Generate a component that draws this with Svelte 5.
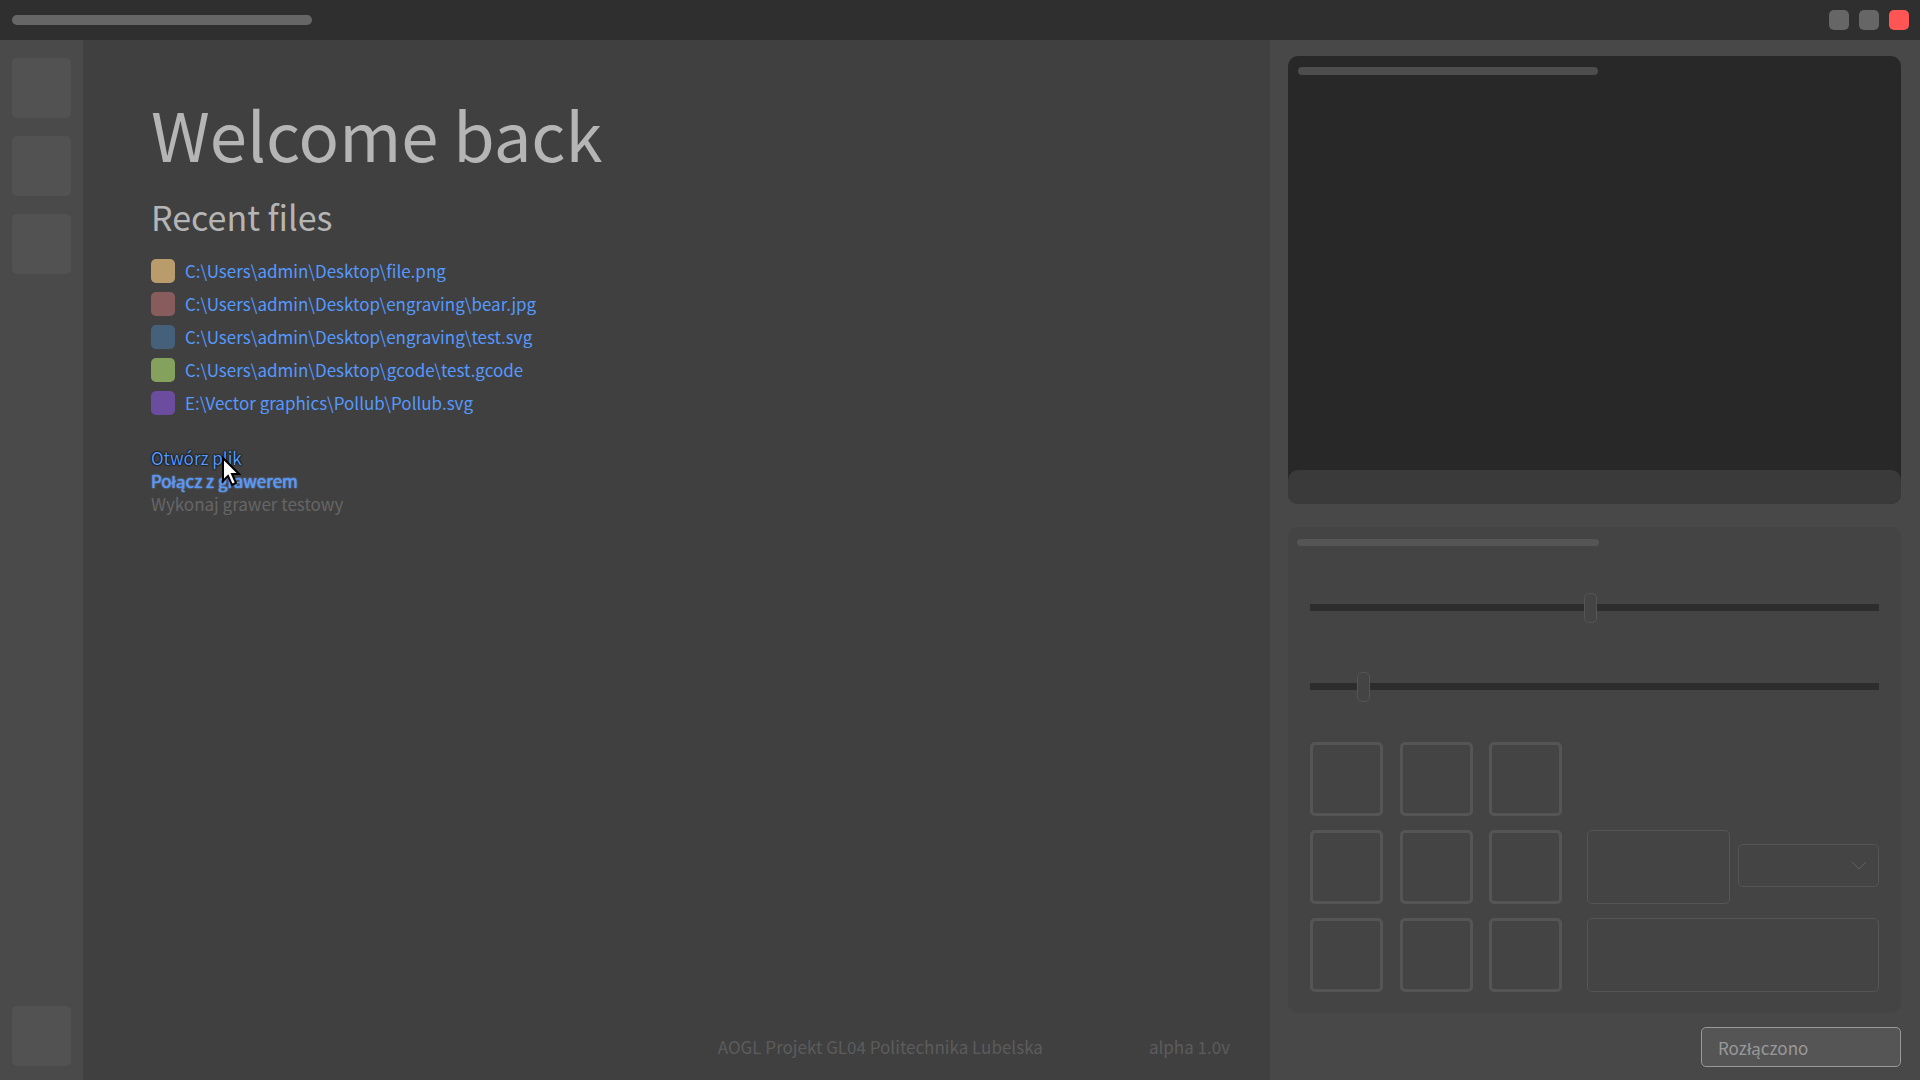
<script>
  const tools = ['Tool 1', 'Tool 2', 'Tool 3'];
  const files = [
    { path: 'C:\\Users\\admin\\Desktop\\file.png', kind: 'png' },
    { path: 'C:\\Users\\admin\\Desktop\\engraving\\bear.jpg', kind: 'jpg' },
    { path: 'C:\\Users\\admin\\Desktop\\engraving\\test.svg', kind: 'svg' },
    { path: 'C:\\Users\\admin\\Desktop\\gcode\\test.gcode', kind: 'gcode' },
    { path: 'E:\\Vector graphics\\Pollub\\Pollub.svg', kind: 'vector' }
  ];
  const pads = [1, 2, 3, 4, 5, 6, 7, 8, 9];
  let power = $state(49.3);
  let speed = $state(8.5);
</script>

<div class="app">
  <header class="titlebar">
    <span class="bar title"></span>
    <div class="window-buttons">
      <button aria-label="Minimize"></button>
      <button aria-label="Maximize"></button>
      <button class="close" aria-label="Close"></button>
    </div>
  </header>

  <div class="body">
    <nav class="sidebar">
      {#each tools as tool}
        <button aria-label={tool}></button>
      {/each}
      <button class="last" aria-label="Settings"></button>
    </nav>

    <main>
      <h1>Welcome back</h1>
      <h2>Recent files</h2>
      <ul class="files">
        {#each files as file}
          <li><span class="swatch {file.kind}"></span><a href="#file">{file.path}</a></li>
        {/each}
      </ul>
      <div class="actions">
        <a class="open" href="#open">Otwórz plik</a>
        <a class="connect" href="#connect">Połącz z grawerem</a>
        <button disabled>Wykonaj grawer testowy</button>
        <svg class="cursor" viewBox="0 0 20 32" aria-hidden="true">
          <path d="M2 2V25L7 20L11 29L15 27L11 18H18Z" />
        </svg>
      </div>
      <footer>
        <span>AOGL Projekt GL04 Politechnika Lubelska</span>
        <span>alpha 1.0v</span>
      </footer>
    </main>

    <aside>
      <section class="viewer">
        <span class="bar"></span>
        <div class="viewer-foot"></div>
      </section>

      <section class="controls">
        <span class="bar"></span>
        <div class="sliders">
          <input type="range" step="any" aria-label="Power" bind:value={power} />
          <input type="range" step="any" aria-label="Speed" bind:value={speed} />
        </div>
        <div class="motion">
          <div class="pads">
            {#each pads as pad}
              <button aria-label="Move {pad}"></button>
            {/each}
          </div>
          <div class="fields">
            <div class="pair">
              <input type="text" aria-label="Distance" />
              <div class="select">
                <select aria-label="Unit"><option></option></select>
                <svg viewBox="0 0 16 10" aria-hidden="true"><path d="M1 1L8 8L15 1" /></svg>
              </div>
            </div>
            <input type="text" aria-label="Command" />
          </div>
        </div>
      </section>

      <button class="status">Rozłączono</button>
    </aside>
  </div>
</div>

<style>
  :global(body) {
    margin: 0;
    background: #404040;
  }
  .app,
  .app * {
    box-sizing: border-box;
  }
  .app {
    display: flex;
    flex-direction: column;
    min-height: 100vh;
    font: 17px/23px 'Noto Sans CJK SC', 'Noto Sans', sans-serif;
    color: #b5b5b5;
  }
  button,
  input,
  select {
    margin: 0;
    padding: 0;
    border: 0;
    border-radius: 5px;
    font: inherit;
    color: inherit;
    background: none;
    appearance: none;
  }
  .titlebar {
    display: flex;
    align-items: center;
    justify-content: space-between;
    height: 40px;
    padding: 0 11px 0 12px;
    background: #2f2f2f;
  }
  .bar {
    display: block;
    width: 300px;
    height: 8px;
    border-radius: 4px;
    background: #4d4d4d;
  }
  .title {
    height: 10px;
    border-radius: 5px;
    background: #666;
  }
  .window-buttons {
    display: flex;
    gap: 10px;
  }
  .window-buttons button {
    width: 20px;
    height: 20px;
    background: #666;
  }
  .window-buttons .close {
    background: #f55;
  }
  .body {
    flex: 1;
    display: grid;
    grid-template-columns: 83px minmax(0, 1187fr) minmax(0, 650fr);
  }
  .sidebar {
    display: flex;
    flex-direction: column;
    gap: 18px;
    padding: 18px 12px 14px;
    background: #4a4a4a;
  }
  .sidebar button {
    height: 60px;
    background: #525252;
  }
  .sidebar .last {
    margin-top: auto;
  }
  main {
    display: flex;
    flex-direction: column;
    padding: 46px 40px 22px 68px;
    background: #404040;
  }
  h1,
  h2 {
    margin: 0;
    font-weight: 400;
  }
  h1 {
    font-size: 67px;
    line-height: 94px;
  }
  h2 {
    font-size: 34px;
    line-height: 74px;
  }
  .files {
    display: flex;
    flex-direction: column;
    gap: 9px;
    margin: 5px 0 0;
    padding: 0;
    list-style: none;
  }
  .files li {
    display: flex;
    gap: 10px;
    height: 24px;
    line-height: 24px;
  }
  .swatch {
    width: 24px;
    height: 24px;
    border-radius: 5px;
  }
  .png { background: #ba9b6c; }
  .jpg { background: #885c5c; }
  .svg { background: #45607b; }
  .gcode { background: #85a15e; }
  .vector { background: #6b4c9f; }
  a {
    color: #59f;
    text-decoration: none;
  }
  .actions {
    position: relative;
    display: flex;
    flex-direction: column;
    align-items: flex-start;
    margin-top: 31px;
  }
  .open {
    text-shadow: 0 0 2px #000, 0 0 2px #000;
  }
  .connect {
    text-shadow: 0 0 1px #7398cf, 0 0 2px #7398cf;
  }
  .actions button {
    color: #666;
  }
  .cursor {
    position: absolute;
    left: 70px;
    top: 10px;
    width: 20px;
    height: 32px;
    fill: #fff;
    stroke: #000;
    stroke-width: 2;
  }
  footer {
    display: flex;
    justify-content: flex-end;
    gap: 106px;
    margin-top: auto;
    color: #5c5c5c;
  }
  aside {
    display: flex;
    flex-direction: column;
    padding: 16px 19px 13px 18px;
    background: #484848;
  }
  .viewer {
    flex: 1;
    display: flex;
    flex-direction: column;
    justify-content: space-between;
    min-height: 200px;
    border-radius: 10px;
    background: #282828;
  }
  .viewer .bar {
    margin: 11px 10px;
  }
  .viewer-foot {
    height: 34px;
    border-radius: 10px;
    background: #3a3a3a;
  }
  .controls {
    margin: 23px 0 14px;
    padding: 12px 22px 21px;
    border-radius: 10px;
    background: #444;
  }
  .controls .bar {
    width: 302px;
    height: 7px;
    margin-left: -13px;
    background: #555;
  }
  .sliders {
    display: grid;
    gap: 49px;
    margin: 46px 0 41px;
  }
  input[type='range'] {
    width: 100%;
    height: 30px;
    border-radius: 0;
  }
  input[type='range']::-webkit-slider-runnable-track {
    height: 7px;
    background: #2d2d2d;
  }
  input[type='range']::-webkit-slider-thumb {
    appearance: none;
    width: 13px;
    height: 30px;
    margin-top: -11px;
    border: 1px solid #555;
    border-radius: 5px;
    background: #444;
  }
  .motion {
    display: flex;
    align-items: flex-end;
    gap: 25px;
  }
  .pads {
    display: grid;
    grid-template-columns: repeat(3, 73px);
    justify-content: space-between;
    width: 252px;
    row-gap: 14px;
  }
  .pads button {
    height: 74px;
    border: 3px solid #555;
  }
  .fields {
    flex: 1;
    display: grid;
    gap: 14px;
    min-width: 0;
  }
  .fields input,
  select {
    width: 100%;
    height: 74px;
    padding: 0 16px;
    border: 1px solid #555;
  }
  .pair {
    display: grid;
    grid-template-columns: 143fr 141fr;
    gap: 8px;
  }
  .select {
    position: relative;
    display: flex;
    align-self: start;
    margin-top: 14px;
  }
  .select select {
    height: 43px;
  }
  .select svg {
    position: absolute;
    right: 12px;
    top: 17px;
    width: 16px;
    height: 10px;
    fill: none;
    stroke: #606060;
  }
  .status {
    align-self: flex-end;
    width: 200px;
    height: 40px;
    padding: 0 16px;
    border: 1px solid #999;
    background: #555;
    color: #999;
    text-align: left;
  }
</style>
